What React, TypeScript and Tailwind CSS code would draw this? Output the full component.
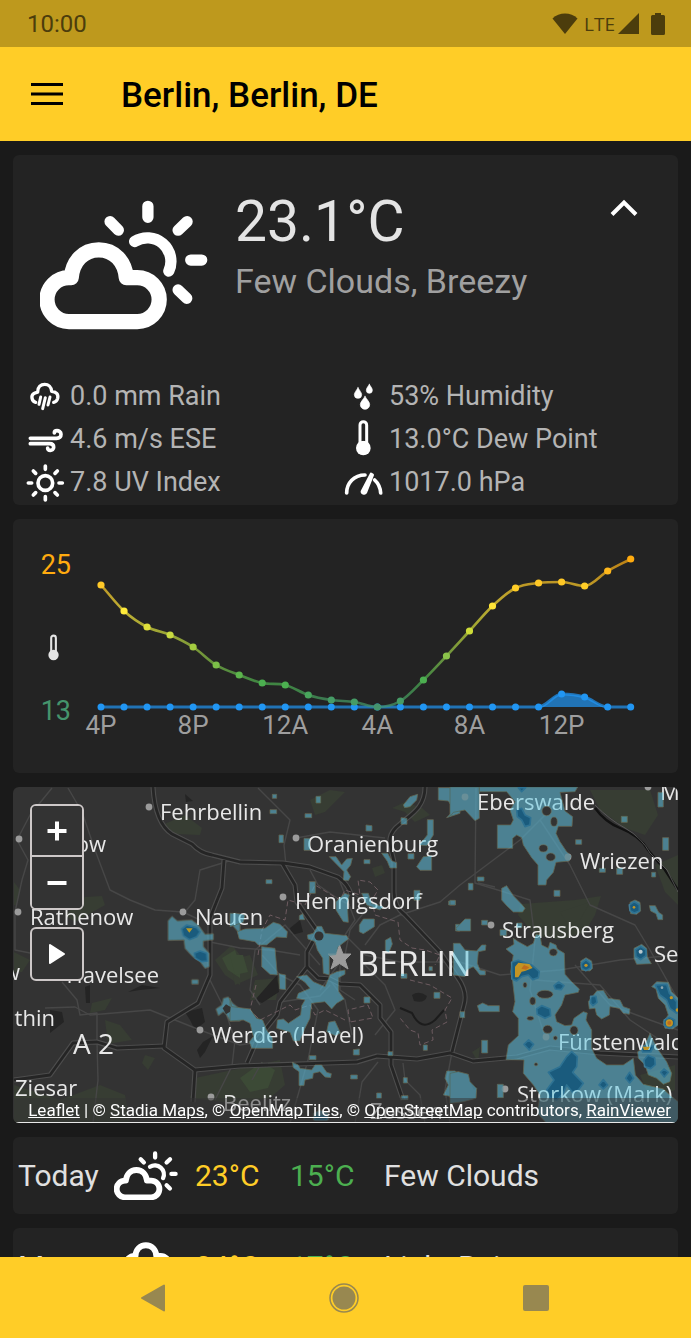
import type { ReactNode } from "react";

const CLOUD =
  "M165 516H371A66 66 0 0 0 371 384H338C334 336 302 300 255 300C208 300 176 336 172 384H165A66 66 0 0 0 165 516Z";

function FewClouds({ className }: { className: string }) {
  return (
    <svg viewBox="78 150 506 391" className={className} fill="none" stroke="white" strokeLinecap="round" strokeLinejoin="round" aria-hidden="true">
      <path d={CLOUD} strokeWidth="46" />
      <path
        d="M363 275A71 71 0 0 1 466 364M403 169V202M289 215L314 241M521 215L494 241M532 331H565M494 421L520 446"
        strokeWidth="34"
      />
    </svg>
  );
}

function LightRain({ className }: { className: string }) {
  return (
    <svg viewBox="3 150 506 391" className={className} fill="none" stroke="white" strokeLinecap="round" strokeLinejoin="round" aria-hidden="true">
      <path d={CLOUD} transform="translate(0 -124)" strokeWidth="48" />
      <path d="M210 450L190 510M270 450L250 510M330 450L310 510" strokeWidth="34" />
    </svg>
  );
}

function SmallIcon({ children }: { children: ReactNode }) {
  return (
    <svg viewBox="0 0 120 120" className="h-10 w-10 shrink-0" fill="none" stroke="white" strokeLinecap="round" strokeLinejoin="round" aria-hidden="true">
      {children}
    </svg>
  );
}

const RainIcon = () => (
  <SmallIcon>
    <path strokeWidth="10" d="M32 76C20 73 17 56 26 50C31 46 37 46 38 45C38 30 48 22 59 22C70 22 79 30 80 43C93 44 101 52 98 64C96 71 91 75 86 76" />
    <path strokeWidth="9" d="M47 60L42 82M61 62L53 95M75 60L69 84" />
  </SmallIcon>
);
const WindIcon = () => (
  <SmallIcon>
    <path strokeWidth="11" d="M16 55H94C103 55 108 50 108 43C108 35 101 32 96 32C91 32 88 35 88 39M16 71H74C82 71 86 76 86 82C86 88 81 91 76 91C71 91 68 88 68 84" />
  </SmallIcon>
);
const SunIcon = () => (
  <SmallIcon>
    <circle cx="61" cy="60" r="22" strokeWidth="11" />
    <path strokeWidth="11" d="M61 9V19M61 101V111M10 60H20M102 60H112M25 24L32 31M97 24L90 31M25 96L32 89M97 96L90 89" />
  </SmallIcon>
);
const DropsIcon = () => (
  <SmallIcon>
    <path
      fill="white"
      strokeWidth="2"
      d="M42 32C47 41 53 47 53 53A11 11 0 0 1 31 53C31 47 37 41 42 32ZM76 22C80 29 85 34 85 40A9 9 0 0 1 67 40C67 34 72 29 76 22ZM63 58C68 68 77 74 77 83A14 14 0 0 1 49 83C49 74 58 68 63 58Z"
    />
  </SmallIcon>
);
const ThermometerIcon = () => (
  <SmallIcon>
    <path strokeWidth="9" d="M48 74V15A10 10 0 0 1 68 15V74" />
    <circle cx="58" cy="84" r="22" fill="white" stroke="none" />
    <path strokeWidth="8" stroke="#232323" strokeLinecap="butt" d="M58 18V62" />
  </SmallIcon>
);
const GaugeIcon = () => (
  <SmallIcon>
    <path strokeWidth="11" d="M8 90C8 60 30 36 63 36M92 51C103 61 109 74 110 90" />
    <path fill="white" strokeWidth="8" d="M81 33L86 36L65 89C62 94 52 90 54 85Z" />
  </SmallIcon>
);

const details = [
  { icon: <RainIcon />, text: "0.0 mm Rain" },
  { icon: <DropsIcon />, text: "53% Humidity" },
  { icon: <WindIcon />, text: "4.6 m/s ESE" },
  { icon: <ThermometerIcon />, text: "13.0°C Dew Point" },
  { icon: <SunIcon />, text: "7.8 UV Index" },
  { icon: <GaugeIcon />, text: "1017.0 hPa" },
];

const temps: [number, string][] = [
  [26, "#ffc928"], [52, "#ffeb3b"], [68, "#e0e03b"], [76, "#c8da40"], [88, "#a4cc40"], [106, "#7cbe48"],
  [116, "#5cb54c"], [124, "#4caf50"], [126, "#4caf50"], [136, "#48a55c"], [141, "#469c66"], [143, "#469c66"],
  [148, "#45946c"], [142, "#469c66"], [121, "#4caf50"], [97, "#8bc34a"], [72, "#cddc39"], [47, "#ffe437"],
  [29, "#ffcd27"], [24, "#ffc826"], [23, "#ffc826"], [27, "#ffcd27"], [12, "#ffb81c"], [0, "#ffab0f"],
];
const STEP = 23.03;
const px = (i: number) => 22 + i * STEP;
const py = (v: number) => v + 10;
const rain = temps.map((_, i) => (i === 20 ? 135 : i === 21 ? 138 : 148));
const hours = ["4P", "8P", "12A", "4A", "8A", "12P"];

function curve(values: number[]) {
  const slope = (i: number) => {
    if (i === 0) return values[1] - values[0];
    if (i === values.length - 1) return values[i] - values[i - 1];
    const a = values[i] - values[i - 1];
    const b = values[i + 1] - values[i];
    return a * b <= 0 ? 0 : (a + b) / 2;
  };
  return values
    .map((v, i) => {
      if (i === 0) return `M${px(0)} ${py(v)}`;
      const t = STEP / 3;
      return `C${px(i - 1) + t} ${py(values[i - 1] + slope(i - 1) / 3)} ${px(i) - t} ${py(v - slope(i) / 3)} ${px(i)} ${py(v)}`;
    })
    .join("");
}

function HourlyChart() {
  return (
    <section className="flex rounded-md bg-[#232323] pt-[30px] pb-[46px]" aria-label="Hourly forecast">
      <div className="flex w-[66px] shrink-0 flex-col items-end justify-between pr-2 text-[27px] leading-8">
        <span className="text-[#ffab0f]">25</span>
        <svg viewBox="0 0 120 120" className="mt-5 mr-[3px] h-7 w-7" fill="none" stroke="#e4e4e4" aria-hidden="true">
          <path strokeWidth="9" d="M48 78V17A10 10 0 0 1 68 17V78" />
          <circle cx="58" cy="90" r="22" fill="#e4e4e4" stroke="none" />
        </svg>
        <span className="text-[#45946c]">13</span>
      </div>
      <svg viewBox="0 0 599 178" className="min-w-0 flex-1 overflow-visible" role="img" aria-label="Temperature and rain by hour">
        <defs>
          <linearGradient id="temperature" gradientUnits="userSpaceOnUse" x1={px(0)} x2={px(23)} y1="0" y2="0">
            {temps.map(([, color], i) => (
              <stop key={i} offset={i / 23} stopColor={color} />
            ))}
          </linearGradient>
        </defs>
        <path d={`${curve(rain)}Z`} fill="#2196f3" fillOpacity="0.7" />
        <path d={curve(rain)} fill="none" stroke="#2196f3" strokeOpacity="0.7" strokeWidth="3" />
        {rain.map((v, i) => (
          <circle key={i} cx={px(i)} cy={py(v)} r="3.5" fill="#2196f3" />
        ))}
        <path d={curve(temps.map(([v]) => v))} fill="none" stroke="url(#temperature)" strokeOpacity="0.7" strokeWidth="2.6" />
        {temps.map(([v, color], i) => (
          <circle key={i} cx={px(i)} cy={py(v)} r="3.6" fill={color} />
        ))}
        {hours.map((hour, i) => (
          <text key={hour} x={px(i * 4)} y="185" textAnchor="middle" fontSize="26" fill="#9e9e9e">
            {hour}
          </text>
        ))}
      </svg>
    </section>
  );
}

const parks = [
  "M160 826L185 815L202 828L200 835L175 834Z", "M85 897L102 896L105 905L75 922L65 915Z", "M215 960L232 945L240 955V985L225 975Z",
  "M230 960L250 955L258 975L235 985Z", "M255 980L280 978L276 1000L250 1000Z", "M14 882L20 890L16 905H14Z", "M14 952L30 960L22 972H14Z",
  "M195 1078L280 1060L285 1085L270 1098L240 1104L190 1098Z", "M105 1020L120 1025L132 1040L108 1044Z", "M145 1055L155 1058L148 1070L142 1063Z",
  "M14 1085L60 1100L100 1085L125 1095L130 1123H14Z", "M92 1003L112 998L105 1010L90 1013Z",
  "M520 904L575 900L601 896L595 915L585 932L560 940L535 935L518 915Z", "M590 790L650 790L658 815L645 835L625 828L600 810Z",
  "M655 865L678 855V905L665 892Z", "M392 808L405 802L422 808L430 815L415 822L405 812Z", "M310 800L330 790L345 792L325 812L315 815Z",
  "M560 912L590 902L580 920L568 925Z", "M640 1075L675 1065V1090L650 1100Z", "M372 868L382 865L385 873L375 877Z", "M472 1052L480 1047L478 1062Z",
];
const brightParks = ["M222 958L235 950L240 965V978L228 970Z", "M240 1078L262 1062L275 1070L268 1088L250 1092Z", "M230 955L243 955L248 972L235 975Z"];
const lakes = [
  "M290 928L300 920L303 932L292 935Z", "M255 1000L277 975L279 992L262 1003Z", "M412 995Q419 990 427 996Q425 1004 414 1001Z",
  "M185 1012L202 1008L205 1022L195 1030L190 1020Z", "M197 1050L203 1042L213 1036L205 1052L200 1058Z", "M85 987L90 985V1003H86Z",
  "M128 992L142 985L160 988L140 990ZM50 1010L62 1012L64 1022L50 1033ZM185 794L193 801L186 802Z", "M470 1082L477 1087L474 1090Z",
];
const motorways = [
  "M153 787Q155 823 172 834L192 844Q200 853 212 855L240 862L283 863L310 867L338 877Q348 884 351 894",
  "M425 787C425 808 410 815 400 824C384 836 391 846 394 862V892Q394 907 405 915L422 933L440 952L458 978Q468 992 464 1005L452 1052",
  "M224 860L222 888L210 918V975L198 1003L167 1022L164 1048L195 1070L240 1066L357 1062L377 1056L417 1059L450 1053L473 1061L517 1057L550 1048L600 1053L678 1057",
  "M14 1080L50 1075L73 1043L97 1042L117 1048L164 1046", "M195 1070L193 1102",
  "M282 863L295 885L297 902L318 932L307 952V967L280 1002L277 1015L257 1040L247 1063",
  "M307 967L318 978L330 979L340 984L360 985L380 1005V1018L391 1032V1065L403 1100",
];
const roads = [
  "M68 788L82 812L95 850L110 890L130 900L155 910L183 912L200 920", "M52 788L30 815L17 840L28 860L22 880L15 912V950L40 955",
  "M210 942L240 948L270 950L300 955", "M45 1008L75 1007L90 1015L150 1010L180 1022L200 1030", "M62 982L77 1000L80 1015L97 1013V1042L98 1080L93 1123",
  "M232 860L200 870L195 900L185 912", "M258 788L290 820L284 845L286 865", "M296 838L330 832L385 838", "M310 870L318 885L340 900L350 905",
  "M338 877L355 920L345 935L365 955", "M350 892L370 905L350 930L345 955L320 990", "M365 945L380 925L400 915L440 902L460 885L480 870L520 840L540 820L560 800",
  "M365 955L400 962L460 962L500 975L560 970L620 960L678 955", "M360 960L385 985L395 1010L375 1035", "M330 980L345 1000L352 1035", "M280 1002L320 996L330 985",
  "M476 788L475 883L530 900L535 940L530 990L545 1037", "M478 883L495 887", "M540 820L570 865L590 905L635 925L650 950L678 1000", "M575 965L610 1005L650 1020L678 1030",
  "M378 1062L362 1082L355 1123", "M403 1063L405 1080L420 1095L425 1123", "M252 1080L262 1062", "M320 965L285 925L255 950L250 990L260 1005",
  "M262 955L280 975L300 985L318 1010L308 1060L290 1123", "M340 955V990L355 1000", "M452 1052L445 1090L450 1123", "M535 980L600 985L630 1020L660 1040", "M200 1030L240 1045L270 1040",
  "M210 980L225 1010L235 1040L232 1066L215 1100",
];

const rainWest = [
  "M474 408L486 394L502 408L545 405L565 420L585 448L610 446V464L580 468V485L598 505V545L585 550L570 530L548 515L525 490L522 465L474 466Z",
  "M545 584h20v13h-20Z",
  "M618 672L636 660L640 640L655 636L668 655L690 672V708H660L650 690L640 680L625 692Z",
  "M660 412L690 390V460L684 440Z",
];
const rainCentre = [
  "M127 28h13v12h-13ZM120 74h20v12h-20ZM258 34h14v20h-14ZM225 86h20v12h-20ZM147 150h13v23h-13ZM222 160h18v36h-18ZM408 120l18 2v16h-18ZM402 224h18v12h-18ZM108 284h18v12h-18ZM238 290h18v35h-18ZM208 392l10 -6l6 18h-16Z",
  "M552 316h18v30h-18ZM656 348h20v12h-20ZM513 566h18v14h-18ZM612 622h18v18h-18ZM402 636h18v18h-18ZM580 780h12v16h-12ZM474 800h14v12h-14ZM370 794l18 -2v18h-18ZM362 870h20v12h-20ZM520 878h12v16h-12ZM440 924h14v16h-14ZM514 932h20v12h-20ZM513 98l18 2v18h-18ZM534 206h18v16h-18ZM677 418h13v20h-13ZM597 545h10v12h-10Z",
  "M625 8H690V85L650 98L672 75L655 48L625 45Z", "M520 60L540 35L563 28L560 45L540 65L524 68Z", "M560 245L580 215L605 212V256H570Z",
  "M568 180L592 150V104H610V150L590 182Z", "M298 215H318L335 240L350 222L367 220L362 240L350 255L362 275L355 287L340 285L342 260L320 238Z",
  "M455 205h18l12 22l15 6v16h-20l-8 -20Z", "M318 350L345 325L358 330L352 355L355 412L340 410L318 375Z", "M388 420L400 402H433V425L400 446L388 440Z",
  "M395 325h20l10 30l35 10l-10 10l-40 -15Z", "M0 385H20L45 390L40 412L0 425Z",
  "M22 440L45 432L105 430L130 412L150 418L172 440L170 458L140 456L110 480H85L75 470L28 462Z", "M95 485L135 490L142 570L120 568L95 545ZM147 566l20 4v44l-18 -2Z",
  "M232 450L250 445L262 424H275L285 445L350 452L355 462L325 485L318 510L298 512V570L280 565L278 520L262 495L255 470L234 462Z",
  "M200 575L230 570L250 590L285 605L300 570L320 560L345 555V568L326 578V620L342 642L320 655L305 672L285 650L245 655L240 700L225 730L210 768H190L180 742L140 730L142 705L160 702L175 715L212 690L215 662L225 645L200 640L205 625L240 610L225 592Z",
  "M466 466L482 457L487 477L477 502L466 497Z", "M0 640L5 665L60 672L80 700L98 705L110 735L128 760V790H65L58 770L70 755L60 715L40 705L0 708Z",
  "M290 740L296 712L315 708L332 745L315 752Z",
  "M187 832L205 840L210 850L245 855L255 840H275L290 862L304 866L302 878L285 876L270 860L250 865L248 880L225 885L222 902H207V860L190 848ZM238 812h20v12h-20Z",
  "M640 930L655 900L645 880L650 858H675L690 870V940Z", "M250 985L270 975L295 985V1005H250Z",
];
const rainEast = [
  "M0 6H88V100L75 107L45 75L10 82L0 95Z",
  "M88 6H383L375 20L330 22L345 78L368 95L366 124H325L318 145L330 170L350 200L364 212L358 228L318 232L310 262L290 285L288 300H264V240L245 218L220 180L215 158L200 150L188 160V190H142V120H182L190 105L180 75L195 50L170 20H88Z",
  "M377 164h18v14h-18ZM448 250h18v12h-18ZM500 250h18v18h-18ZM605 262h12v14h-12ZM514 94h18v18h-18ZM638 158h18v38h-18ZM624 22h16v44h-16ZM82 276h20v12h-20ZM55 295h14v20h-14ZM312 316h18v18h-18ZM0 346h16v14h-16ZM95 406h18v14h-18ZM150 434h20v18h-20ZM30 680h14v18h-14ZM95 766h18v38h-18ZM142 898h18v40h-18ZM200 414h16v14h-16Z",
  "M18 430L45 402H62V438H22Z", "M155 310L170 302L190 332L215 358L225 370L218 381H190L170 362L155 345Z", "M598 362h18l10 20l12 8v14h-14l-6 -18l-16 -8Z",
  "M10 475H30L45 495L80 498L95 480H108L106 496L85 500L82 535L90 555L106 558V570H90L70 545L50 555L45 575L10 570Z",
  "M540 352L555 345L570 352L572 378L560 388L542 386Z", "M552 490L575 478L590 490L592 515L604 536L560 538L552 520Z", "M392 528L408 518L425 528L428 550L420 558L395 556Z",
  "M82 662L98 654L115 662H148V680H88Z",
  "M605 605L620 590L655 592L665 620L685 640V720L668 732L645 730L640 710L655 690L645 660L625 640L618 612Z",
  "M168 492L192 478L190 460L205 470L232 485L250 475L258 448L270 450L275 480L295 490L300 472L318 480L322 492L343 505L345 568L365 590L388 612L385 622L345 630L335 660L315 690L320 710L345 722L365 720L372 700L400 680L412 684L408 705L425 735V790L440 820L470 840H520L550 820L556 870L580 898L640 912L665 935L685 950V1015H290L262 985L270 930L250 900L220 865L222 825L168 824L175 780L205 752V700L188 680L195 650L188 590L182 560L190 510Z",
  "M415 650L440 618L460 616L475 640L510 645L520 665L540 672L538 688L520 685L508 670L480 665L478 690L455 702L440 690L435 670L418 672Z",
  "M563 800L580 790L600 745L612 770L625 795L650 830L665 865L660 890L640 898L620 880L595 870L585 840L565 820Z",
  "M0 865L25 860L55 868L60 890L80 910L78 940L40 950L0 955Z",
];
const heavyEast = [
  "M200 75L215 70L225 90L242 98L240 120L225 125L215 105L202 95ZM205 8h22l-12 12Z",
  "M185 532L205 526L245 540L268 560L265 578L248 584L235 570L215 575L200 588L186 582Z",
  "M260 672L275 662L300 672L302 692L285 700L262 688Z", "M312 602l14 -11l16 11l-8 12l-18 -2Z", "M222 778l14 -13l15 13l-13 17Z", "M422 634h16l3 18l-12 10l-7 -8Z",
  "M295 862L330 845L350 815L365 800L382 815L380 845L368 862L400 895L385 915L370 925L350 900L340 925L320 945L300 940L290 915L312 885Z",
  "M447 900l13 -16l13 16l-13 12ZM527 880l12 -18l12 18l-12 14ZM582 825l12 -14l20 8l2 20l-14 12l-18 -6ZM632 862l10 -10l13 10l-12 14Z",
  "M538 360L553 350L568 360V378L553 384L540 377Z", "M556 495L572 484L588 495V512L572 524L558 514Z", "M394 536L408 524L422 536V549L408 557L395 550Z",
  "M616 600L650 598L658 625L680 650V685L660 670L650 645L630 630Z", "M643 705L658 697L674 705V722L658 730L643 721Z", "M572 783h40l-10 18h-24Z",
];
const holes: [number, number, number, number][] = [
  [290, 78, 14, 14], [312, 110, 10, 14], [280, 190, 13, 11], [302, 216, 14, 12], [225, 600, 6, 8], [310, 502, 12, 11],
  [285, 628, 24, 12], [248, 648, 9, 12], [241, 700, 10, 6], [293, 733, 14, 12], [258, 838, 5, 5], [316, 759, 6, 6], [372, 736, 12, 13],
];
const towns: [string, number, number][] = [
  ["Fehrbellin", 160, 820], ["Oranienburg", 307, 852], ["Eberswalde", 477, 810], ["Wriezen", 580, 869], ["Nauen", 195, 925],
  ["Hennigsdorf", 295, 909], ["Rathenow", 30, 925], ["Strausberg", 502, 938], ["Seelow", 654, 962], ["Werder (Havel)", 211, 1043],
  ["Fürstenwalde", 558, 1050], ["Storkow (Mark)", 517, 1102], ["Beelitz", 223, 1111], ["Ziesar", 15, 1096], ["Zossen", 370, 1119], ["Müncheberg", 660, 800],
];
const townsEndingAt: [string, number, number][] = [["Rhinow", 106, 852], ["Havelsee", 159, 983], ["Genthin", 55, 1026], ["Jerichow", 20, 980]];
const dots: [number, number][] = [
  [149, 807], [19, 839], [18, 912], [183, 912], [296, 838], [283, 897], [465, 797], [568, 857], [491, 925], [200, 1030], [546, 1037], [505, 1089], [211, 1097], [648, 787],
];

function RadarMap() {
  return (
    <svg viewBox="13 787 665 336" preserveAspectRatio="xMidYMid slice" className="isolate block w-full" role="img" aria-label="Rain radar around Berlin">
      <defs>
        <g id="rain-area">
          <g transform="translate(10 785) scale(0.3333)">{rainWest.map((d) => <path key={d} d={d} />)}</g>
          <g transform="translate(230 785) scale(0.3333)">{rainCentre.map((d) => <path key={d} d={d} />)}</g>
          <g transform="translate(450 785) scale(0.3333)">{rainEast.map((d) => <path key={d} d={d} />)}</g>
        </g>
      </defs>
      <rect x="13" y="787" width="665" height="336" fill="#333333" />
      {parks.map((d) => <path key={d} d={d} fill="#373d33" />)}
      {brightParks.map((d) => <path key={d} d={d} fill="#3c4a36" />)}
      {lakes.map((d) => <path key={d} d={d} fill="#242424" />)}
      <g fill="none" strokeLinejoin="round">
        {roads.map((d) => <path key={d} d={d} stroke="#474747" strokeWidth="1.4" />)}
        {motorways.map((d) => <path key={d} d={d} stroke="#4d4d4d" strokeWidth="5" />)}
        {motorways.map((d) => <path key={d} d={d} stroke="#252525" strokeWidth="2.8" />)}
        <path d="M400 1008L412 1013Q421 1032 435 1020L444 1010" stroke="#1c1c1c" strokeWidth="2" />
        <path d="M595 808Q605 822 620 828Q640 836 648 850L665 870L678 890" stroke="#111111" strokeWidth="2.4" />
        <path d="M595 805Q610 820 625 828Q642 838 650 853L667 870L678 892" stroke="#626262" strokeWidth="0.8" />
        <path
          d="M258 955L262 930L270 915L285 920L288 900L305 905L315 885L340 900L345 890L360 895L358 880L370 882L378 890L372 900L375 915L398 922L400 940L412 948L425 950L440 955L435 965M410 980L430 985L452 998L445 1010L447 1022L432 1030L433 1040L420 1045L418 1033L410 1030L400 1018M350 1022L348 1010L368 1005L373 1018L350 1022M345 1020L325 1010L315 1015L310 1005L295 1010L290 1005L260 1020L250 1010L256 985"
          stroke="#6d5b60" strokeWidth="1" strokeDasharray="5 3"
        />
      </g>
      <use href="#rain-area" fill="#9ac9d8" stroke="#a09268" strokeWidth="2" strokeLinejoin="round" opacity="0.6" />
      <g fill="#26637f" stroke="#437c96" strokeWidth="5" strokeLinejoin="round">
        <path transform="translate(10 785) scale(0.3333)" d="M515 432L530 420L560 428L570 440L560 455L538 464L520 452ZM553 505L570 498L590 505L592 528L575 530L556 520Z" />
        <path transform="translate(230 785) scale(0.3333)" d="M255 992h35v12h-35Z" />
        <g transform="translate(450 785) scale(0.3333)">{heavyEast.map((d) => <path key={d} d={d} />)}</g>
      </g>
      {dots.map(([x, y]) => <circle key={`${x}-${y}`} cx={x} cy={y} r="3.4" fill="#9b9b9b" />)}
      <path d="M339.500 945L343 954H351L345 960L348 969L339.500 963.500L331 969L334 960L328 954H336Z" fill="#9b9b9b" stroke="#9b9b9b" />
      <g className="font-['Open_Sans',sans-serif]" fill="#e8e8e8" fontSize="22">
        {towns.map(([name, x, y]) => <text key={name} x={x} y={y}>{name}</text>)}
        {townsEndingAt.map(([name, x, y]) => <text key={name} x={x} y={y} textAnchor="end">{name}</text>)}
        <text x="73" y="1054" fontSize="28">A 2</text>
        <text x="357" y="976" fontSize="34">BERLIN</text>
      </g>
      <use href="#rain-area" fill="#adebfa" className="mix-blend-multiply" />
      <g strokeWidth="2">
        <g transform="translate(10 785) scale(0.3333)">
          <path d="M528 430h20l-10 13Z" fill="#b99a26" />
          <path d="M638 670l10 -12l14 8l-2 14l-12 8Z" fill="#333333" />
        </g>
        <circle cx="319" cy="936" r="4.5" fill="#333333" />
        <g transform="translate(450 785) scale(0.3333)">
          {holes.map(([x, y, rx, ry]) => <ellipse key={`${x}-${y}`} cx={x} cy={y} rx={rx} ry={ry} fill="#333333" stroke="#6d715d" />)}
          <g fill="#c39424">
            <path d="M195 545L205 533L238 537L248 549L225 558L215 560L205 577H195Z" />
            <path d="M222 540l16 7l-10 7l-14 -3Z" fill="#c06c1c" />
            <path d="M578 785h22l-6 10h-12Z" />
            <circle cx="658" cy="714" r="11" />
            <circle cx="658" cy="714" r="6" fill="#c06c1c" />
            <circle cx="664" cy="638" r="5" />
            <circle cx="682" cy="675" r="5" />
            <circle cx="408" cy="541" r="5" />
            <circle cx="552" cy="367" r="4" />
            <circle cx="572" cy="500" r="6" fill="#b7c8ce" />
            <circle cx="636" cy="608" r="4" fill="#8fa6ae" />
          </g>
        </g>
      </g>
    </svg>
  );
}

function MapCard() {
  const button = "flex h-[51px] w-[50px] items-center justify-center bg-[#333333]";
  return (
    <section className="relative overflow-hidden rounded-md" aria-label="Rain radar">
      <RadarMap />
      <div className="absolute top-[17px] left-[17px] flex flex-col gap-[17px]">
        <div className="overflow-hidden rounded-md border-2 border-[#cdc8c8]">
          <button className={`${button} border-b-2 border-[#cdc8c8]`} aria-label="Zoom in">
            <svg viewBox="0 0 20 20" className="h-5 w-5" stroke="white" strokeWidth="4" aria-hidden="true"><path d="M0.5 10H19.5M10 0.5V19.5" /></svg>
          </button>
          <button className={button} aria-label="Zoom out">
            <svg viewBox="0 0 20 20" className="h-5 w-5" stroke="white" strokeWidth="4" aria-hidden="true"><path d="M0.5 10H19.5" /></svg>
          </button>
        </div>
        <button className="flex h-[54px] w-[54px] items-center justify-center rounded-md border-2 border-[#cdc8c8] bg-[#333333]" aria-label="Play radar">
          <svg viewBox="0 0 20 22" className="h-[22px] w-5" fill="white" stroke="white" strokeWidth="2" strokeLinejoin="round" aria-hidden="true"><path d="M3 2L17 11L3 20Z" /></svg>
        </button>
      </div>
      <p className="absolute right-0 bottom-0 left-0 border-b border-[#e8e8e8] bg-[#333333]/50 pr-[7px] text-right text-[17px] leading-6 whitespace-nowrap text-white">
        <a href="#leaflet" className="underline">Leaflet</a> | © <a href="#stadia" className="underline">Stadia Maps</a>, ©{" "}
        <a href="#openmaptiles" className="underline">OpenMapTiles</a>, © <a href="#openstreetmap" className="underline">OpenStreetMap</a> contributors,{" "}
        <a href="#rainviewer" className="underline">RainViewer</a>
      </p>
    </section>
  );
}

const days = [
  { day: "Today", icon: <FewClouds className="w-16" />, high: "23°C", low: "15°C", text: "Few Clouds" },
  { day: "Mon", icon: <LightRain className="w-16 overflow-visible" />, high: "24°C", low: "17°C", text: "Light Rain" },
];

export default function App() {
  return (
    <div className="flex h-screen flex-col overflow-hidden bg-[#1a1a1a] font-[Roboto,sans-serif]">
      <div className="flex h-[47px] shrink-0 items-center justify-between bg-[#be991d] pr-[26px] pl-[27px] text-[#4c3d0c]">
        <span className="text-[24px]">10:00</span>
        <div className="flex items-center">
          <svg viewBox="0 0 26 21" className="h-[21px] w-[26px]" fill="currentColor" aria-hidden="true"><path d="M13 21L0.5 5.5C7 -1.2 19 -1.2 25.5 5.5Z" /></svg>
          <span className="ml-[6px] font-['Open_Sans',sans-serif] text-[19px] leading-6">LTE</span>
          <svg viewBox="0 0 22 21" className="ml-[3px] h-[21px] w-[22px]" fill="currentColor" aria-hidden="true"><path d="M21 0V21H0Z" /></svg>
          <svg viewBox="0 0 14 22" className="ml-[11px] h-[22px] w-[14px]" fill="currentColor" aria-hidden="true"><path d="M4 0H10V2H12.500Q14 2 14 3.500V20.500Q14 22 12.500 22H1.500Q0 22 0 20.500V3.500Q0 2 1.500 2H4Z" /></svg>
        </div>
      </div>
      <header className="flex h-[94px] shrink-0 items-center bg-[#ffcd27] pl-[31px] text-black">
        <button aria-label="Open menu">
          <svg viewBox="0 0 32 22" className="h-[22px] w-8" stroke="currentColor" strokeWidth="3" aria-hidden="true"><path d="M0 1.500H32M0 11H32M0 20.500H32" /></svg>
        </button>
        <h1 className="ml-[58px] pt-1 text-[35px] leading-10 font-medium">Berlin, Berlin, DE</h1>
      </header>

      <main className="flex min-h-0 flex-1 flex-col gap-[14px] overflow-hidden px-[13px] pt-[14px] *:shrink-0">
        <section className="rounded-md bg-[#232323] pb-px" aria-label="Current weather">
          <div className="flex h-[220px] items-start pt-[29px] pl-[27px]">
            <FewClouds className="mt-4 w-[168px] shrink-0" />
            <div className="ml-[27px] flex-1">
              <p className="text-[57px] leading-[76px] text-[#e4e4e4]">23.1°C</p>
              <p className="text-[34px] leading-[43px] text-[#a0a0a0]">Few Clouds, Breezy</p>
            </div>
            <button className="mt-[14px] mr-10" aria-label="Hide details">
              <svg viewBox="0 0 28 20" className="h-5 w-7" fill="none" stroke="white" strokeWidth="4" aria-hidden="true"><path d="M2 16.500L14 4.500L26 16.500" /></svg>
            </button>
          </div>
          <ul className="grid grid-cols-[319px_1fr] pl-3 text-[27px] text-[#b4b4b4]">
            {details.map(({ icon, text }) => (
              <li key={text} className="flex h-[43px] items-center gap-[5px]">{icon}{text}</li>
            ))}
          </ul>
        </section>

        <HourlyChart />
        <MapCard />

        {days.map(({ day, icon, high, low, text }) => (
          <section key={day} className="grid h-[77px] grid-cols-[96px_81px_95px_94px_1fr] items-center rounded-md bg-[#232323] pl-[5px] text-[30px] text-[#e0e0e0]" aria-label={day}>
            <span>{day}</span>
            {icon}
            <span className="text-[#ffcd27]">{high}</span>
            <span className="text-[#4caf50]">{low}</span>
            <span>{text}</span>
          </section>
        ))}
      </main>

      <nav className="flex h-[81px] shrink-0 items-center justify-around bg-[#ffcd27] pr-[59px] pl-[57px] text-[#988850]">
        <button aria-label="Back">
          <svg viewBox="0 0 30 30" className="h-[30px] w-[30px]" fill="currentColor" stroke="currentColor" strokeWidth="2" strokeLinejoin="round" aria-hidden="true"><path d="M4 15L26 2.500V27.500Z" /></svg>
        </button>
        <button aria-label="Home">
          <svg viewBox="0 0 30 30" className="h-[30px] w-[30px]" fill="currentColor" aria-hidden="true">
            <circle cx="15" cy="15" r="11.500" />
            <circle cx="15" cy="15" r="14" fill="none" stroke="currentColor" strokeWidth="1.500" />
          </svg>
        </button>
        <button aria-label="Recent apps">
          <svg viewBox="0 0 30 30" className="h-[30px] w-[30px]" fill="currentColor" aria-hidden="true"><rect x="2" y="2" width="26" height="26" rx="2" /></svg>
        </button>
      </nav>
    </div>
  );
}
